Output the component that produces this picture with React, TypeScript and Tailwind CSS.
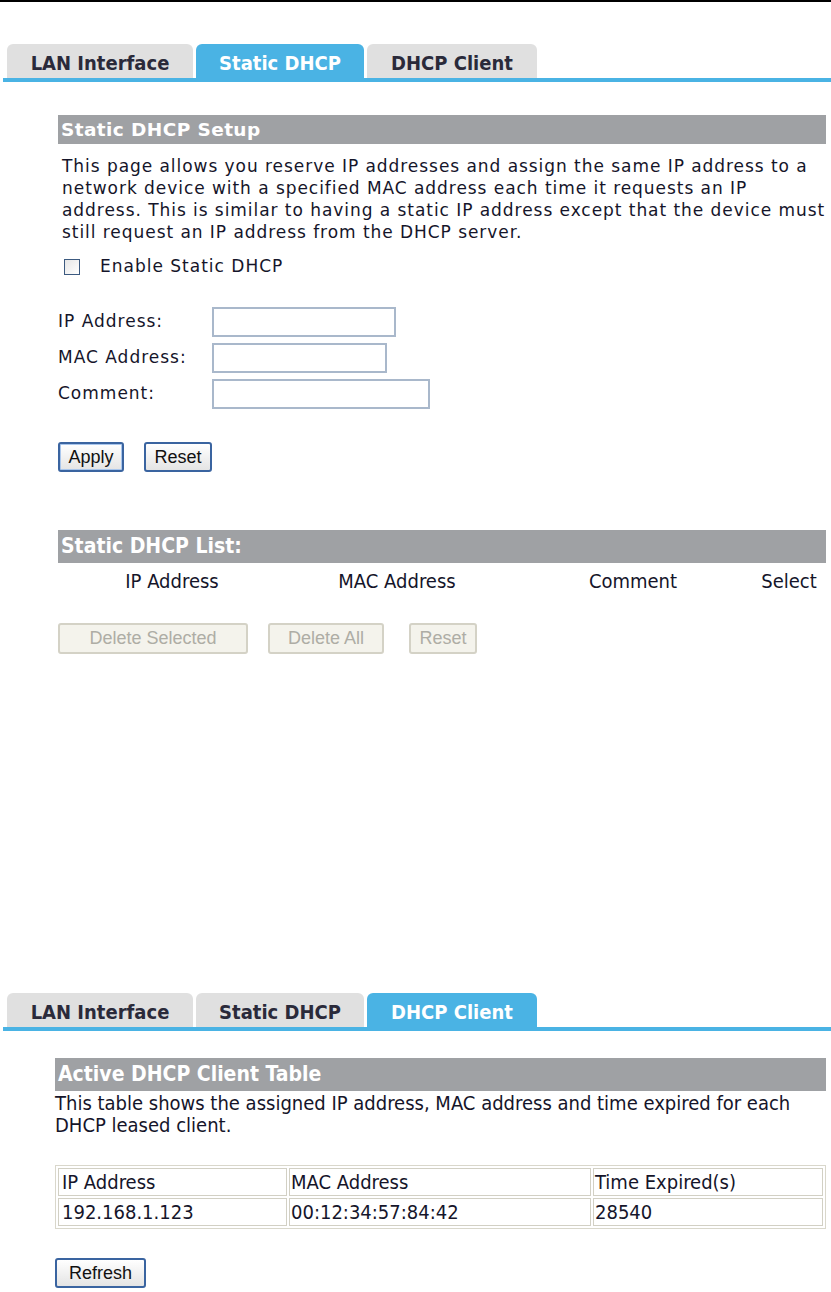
import React from "react"

const tabNames = ["LAN Interface", "Static DHCP", "DHCP Client"]
const tabWidths = ["w-[186px]", "w-[168px]", "w-[170px]"]

function Tabs({ active }: { active: number }) {
    return (
        <div className="flex flex-col">
            <div className="flex items-end gap-[3px] pl-[7px]">
                {tabNames.map((name, i) => (
                    <div
                        key={name}
                        className={`${tabWidths[i]} flex h-[34px] items-center justify-center rounded-t-[6px] pt-[3px] font-['DejaVu_Sans_Condensed','DejaVu_Sans',sans-serif] text-[20px] font-bold [font-stretch:condensed] ${
                            i === active ? "bg-[#4ab3e4] text-white" : "bg-[#e0e0e0] text-[#2a2a3a]"
                        }`}
                    >
                        {name}
                    </div>
                ))}
            </div>
            <div className="ml-[3px] h-[4px] bg-[#4ab3e4]" />
        </div>
    )
}

function Bar({ title, condensed }: { title: string; condensed?: boolean }) {
    return (
        <div
            className={`flex items-center bg-[#9fa1a4] px-[3px] font-bold text-white ${
                condensed
                    ? "h-[33px] font-['DejaVu_Sans_Condensed','DejaVu_Sans',sans-serif] text-[21px] [font-stretch:condensed]"
                    : "h-[29px] font-['DejaVu_Sans',Verdana,sans-serif] text-[18.5px] tracking-[0.4px]"
            }`}
        >
            {title}
        </div>
    )
}

function FieldRow({ label, width }: { label: string; width: string }) {
    return (
        <div className="flex h-[36px] items-center">
            <span className="w-[154px]">{label}</span>
            <input className={`${width} h-[30px] border-2 border-[#a9b8cb] bg-white outline-none`} />
        </div>
    )
}

const winBtn =
    "block h-[30px] rounded-[3px] border-2 border-[#3a64a0] bg-gradient-to-b from-white to-[#e4e4e4] font-['Liberation_Sans',Arial,sans-serif] text-[18px] leading-[24px] text-[#111]"
const offBtn =
    "h-[31px] rounded-[3px] border-2 border-[#d4d2c6] bg-[#f4f3ec] font-['Liberation_Sans',Arial,sans-serif] text-[18px] text-[#aeada5]"
const cell = "h-[28px] border border-[#d2d0c4] py-0 align-middle"

export default function App() {
    return (
        <div className="min-h-[1292px] w-[831px] bg-white text-[#15152a]">
            <div className="h-[2px] bg-black" />

            {/* Static DHCP page */}
            <div className="mt-[42px]">
                <Tabs active={1} />
            </div>
            <div className="pl-[58px] pr-[5px] pt-[33px] font-['DejaVu_Sans',Verdana,sans-serif] text-[17px] tracking-[1px]">
                <Bar title="Static DHCP Setup" />
                <p className="mt-[11px] -mr-[5px] pl-[4px] leading-[22px] tracking-[0.95px]">
                    This page allows you reserve IP addresses and assign the same IP address to a network device with a
                    specified MAC address each time it requests an IP address. This is similar to having a static IP
                    address except that the device must still request an IP address from the DHCP server.
                </p>
                <label className="mt-[13px] flex h-[22px] items-center pl-[6px]">
                    <span className="h-[16px] w-[16px] border border-[#3c5a80] bg-gradient-to-br from-[#e6e6e6] to-white" />
                    <span className="ml-[20px]">Enable Static DHCP</span>
                </label>

                <div className="mt-[26px] flex flex-col">
                    <FieldRow label="IP Address:" width="w-[184px]" />
                    <FieldRow label="MAC Address:" width="w-[175px]" />
                    <FieldRow label="Comment:" width="w-[218px]" />
                </div>

                <div className="mt-[30px] flex gap-[20px] tracking-normal">
                    <button className={`${winBtn} w-[66px] shadow-[inset_0_0_0_1px_#a9c6ec]`}>Apply</button>
                    <button className={`${winBtn} w-[68px]`}>Reset</button>
                </div>

                <div className="mt-[58px] tracking-normal">
                    <Bar title="Static DHCP List:" condensed />
                </div>
                <div className="grid grid-cols-[228px_222px_250px_62px] py-[3px] font-['DejaVu_Sans_Condensed','DejaVu_Sans',sans-serif] text-[20px] tracking-normal [font-stretch:condensed]">
                    <span className="text-center">IP Address</span>
                    <span className="text-center">MAC Address</span>
                    <span className="text-center">Comment</span>
                    <span className="text-center">Select</span>
                </div>
                <div className="mt-[24px] flex tracking-normal">
                    <button className={`${offBtn} w-[190px]`}>Delete Selected</button>
                    <button className={`${offBtn} ml-[20px] w-[116px]`}>Delete All</button>
                    <button className={`${offBtn} ml-[25px] w-[68px]`}>Reset</button>
                </div>
            </div>

            {/* DHCP Client page */}
            <div className="mt-[339px]">
                <Tabs active={2} />
            </div>
            <div className="pl-[55px] pr-[5px] pt-[27px] font-['DejaVu_Sans_Condensed','DejaVu_Sans',sans-serif] text-[20px] [font-stretch:condensed]">
                <Bar title="Active DHCP Client Table" condensed />
                <p className="mt-[1px] leading-[22px]">
                    This table shows the assigned IP address, MAC address and time expired for each DHCP leased client.
                </p>
                <table className="mt-[29px] w-full border-separate border-spacing-[2px] border border-[#d9d7cb] leading-[22px]">
                    <tbody>
                        <tr>
                            <td className={`${cell} w-[229px] px-[3px]`}>IP Address</td>
                            <td className={`${cell} w-[302px] px-[1px]`}>MAC Address</td>
                            <td className={`${cell} px-[1px]`}>Time Expired(s)</td>
                        </tr>
                        <tr>
                            <td className={`${cell} px-[3px]`}>192.168.1.123</td>
                            <td className={`${cell} px-[1px]`}>00:12:34:57:84:42</td>
                            <td className={`${cell} px-[1px]`}>28540</td>
                        </tr>
                    </tbody>
                </table>
                <button className={`${winBtn} mt-[29px] w-[91px]`}>Refresh</button>
            </div>
        </div>
    )
}
